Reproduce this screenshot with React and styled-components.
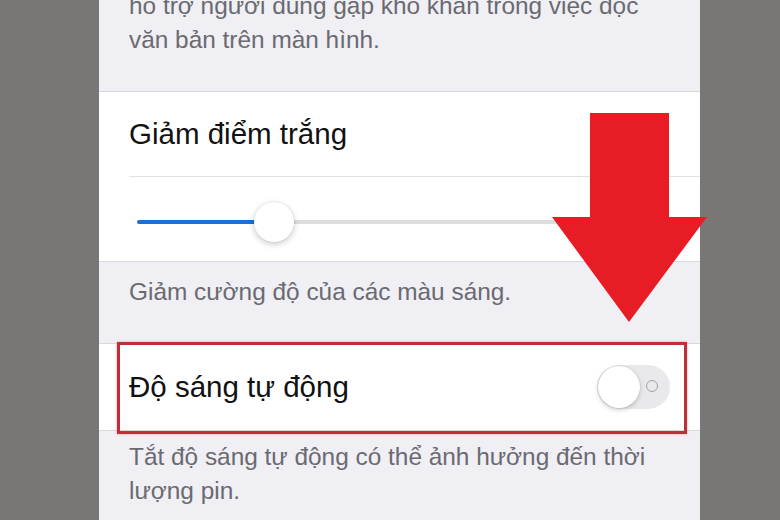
import React from "react";
import styled, { createGlobalStyle } from "styled-components";

const GlobalStyle = createGlobalStyle`
  html, body {
    margin: 0;
    padding: 0;
    background: #7a7675;
  }
  body {
    font-family: "Liberation Sans", Arial, sans-serif;
  }
`;

const Page = styled.div`
  position: relative;
  width: 780px;
  height: 520px;
  overflow: hidden;
  display: flex;
  padding-left: 99px;
  box-sizing: border-box;
`;

const Screen = styled.div`
  width: 601px;
  height: 520px;
  background: #efeff4;
  display: flex;
  flex-direction: column;
`;

const Footnote = styled.div`
  padding: ${(p) => p.$pad};
  font-size: 24.4px;
  line-height: 34px;
  color: #6a6a70;
  padding-left: 30px;
  padding-right: 10px;
  white-space: nowrap;
`;

const Group = styled.div`
  background: #fff;
  border-top: 1px solid #d9d9dd;
  border-bottom: 1px solid #d9d9dd;
  position: relative;
`;

const TitleRow = styled.div`
  height: ${(p) => p.$h}px;
  display: flex;
  align-items: center;
  justify-content: space-between;
  padding: 0 30px;
  font-size: 29.5px;
  color: #111;
  border-bottom: ${(p) => (p.$divider ? "1px solid #e2e2e4" : "none")};
  margin-left: ${(p) => (p.$divider ? "30px" : "0")};
  padding-left: ${(p) => (p.$divider ? "0" : "30px")};
`;

const SliderRow = styled.div`
  height: 84px;
  display: flex;
  align-items: center;
  padding: 5px 32px 0 38px;
  box-sizing: border-box;
`;

const Track = styled.div`
  position: relative;
  flex: 1;
  height: 4px;
  border-radius: 2px;
  background: #dedede;
`;

const Fill = styled.div`
  height: 100%;
  border-radius: 2px;
  background: #1e6fd9;
`;

const Thumb = styled.div`
  position: absolute;
  top: 50%;
  width: 40px;
  height: 40px;
  margin: -20px 0 0 -20px;
  border-radius: 50%;
  background: #fff;
  box-shadow: 0 2px 6px rgba(0, 0, 0, 0.22), 0 0 0 0.5px rgba(0, 0, 0, 0.08);
`;

const Toggle = styled.div`
  position: relative;
  width: 73px;
  height: 44px;
  border-radius: 22px;
  background: #e9e9eb;
  flex-shrink: 0;
`;

const Knob = styled.div`
  position: absolute;
  left: 1px;
  top: 1px;
  width: 42px;
  height: 42px;
  border-radius: 50%;
  background: #fff;
  box-shadow: 0 2px 5px rgba(0, 0, 0, 0.18), 0 0 0 0.5px rgba(0, 0, 0, 0.1);
`;

const OffMark = styled.div`
  position: absolute;
  right: 12px;
  top: 15px;
  width: 10px;
  height: 10px;
  border-radius: 50%;
  border: 1.5px solid #a3a3a6;
`;

const Highlight = styled.div`
  position: absolute;
  left: 18px;
  right: 13px;
  top: -2px;
  bottom: -4px;
  border: 3px solid #c02f38;
  box-shadow: 0 0 2px rgba(220, 60, 70, 0.5);
  pointer-events: none;
`;

const Arrow = styled.svg`
  position: absolute;
  left: 0;
  top: 0;
  pointer-events: none;
`;

function Slider({ value }) {
  return (
    <Track>
      <Fill style={{ width: `${value * 100}%` }} />
      <Thumb style={{ left: `${value * 100}%` }} />
    </Track>
  );
}

export default function App() {
  return (
    <>
      <GlobalStyle />
      <Page>
        <Screen>
          <Footnote $pad="0 0 34px" style={{ marginTop: -11 }}>
            hỗ trợ người dùng gặp khó khăn trong việc đọc
            <br />
            văn bản trên màn hình.
          </Footnote>
          <Group>
            <TitleRow $h={84} $divider>Giảm điểm trắng</TitleRow>
            <SliderRow>
              <Slider value={0.258} />
            </SliderRow>
          </Group>
          <Footnote $pad="13px 0 34px">Giảm cường độ của các màu sáng.</Footnote>
          <Group>
            <TitleRow $h={86}>
              Độ sáng tự động
              <Toggle>
                <Knob />
                <OffMark />
              </Toggle>
            </TitleRow>
            <Highlight />
          </Group>
          <Footnote $pad="9px 0 0">
            Tắt độ sáng tự động có thể ảnh hưởng đến thời
            <br />
            lượng pin.
          </Footnote>
        </Screen>
        <Arrow width="780" height="520" viewBox="0 0 780 520">
          <polygon
            points="590,113 669,113 669,217 707,217 629,322 552,217 590,217"
            fill="#e81c24"
          />
        </Arrow>
      </Page>
    </>
  );
}
